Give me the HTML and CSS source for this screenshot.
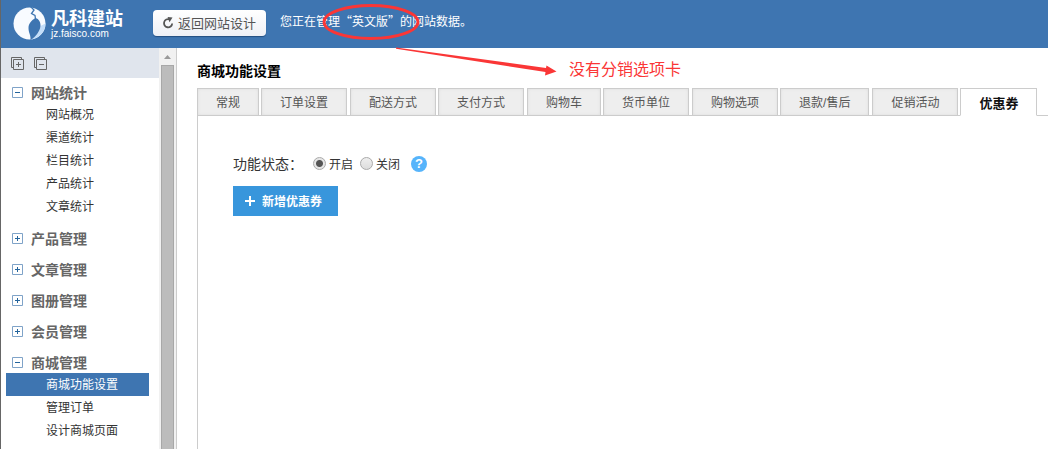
FILE: index.html
```html
<!DOCTYPE html>
<html lang="zh-CN">
<head>
<meta charset="utf-8">
<title>商城功能设置</title>
<link rel="stylesheet" href="styles.css">
</head>
<body>
<header class="topbar">
  <a class="brand" href="#">
    <svg class="brand-mark" viewBox="0 0 34 34" aria-hidden="true">
      <circle cx="16.5" cy="17.500" r="16" fill="#f8fbff"/>
      <path fill="#c3defa" d="M32.500 17.500C32.500 25 27 32 18 33.500C24 30 27 25 27.500 20Z"/>
      <path fill="#3e75b1" d="M22.500 12C18 14.500 15.500 18 15.500 22C15.500 27 18 29 17.500 34C23 31 27 25 27.500 20C27.700 16 26 13 22.500 12Z"/>
      <path fill="none" stroke="#3e75b1" stroke-width="1.300" d="M17.500 0.500L21 4L18.500 7.500L22 9.500L22.500 13"/>
    </svg>
    <span class="brand-text">
      <strong class="brand-name">凡科建站</strong>
      <span class="brand-url">jz.faisco.com</span>
    </span>
  </a>
  <button class="back" type="button">
    <svg class="back-icon" viewBox="0 0 12 12" aria-hidden="true">
      <path d="M7.600 2.400A4.100 4.100 0 1 0 10.200 6.500" fill="none" stroke="#555" stroke-width="1.800"/>
      <path d="M5.600 0L10.500 .500L7.500 5.200Z" fill="#555"/>
    </svg>
    返回网站设计
  </button>
  <p class="notice">您正在管理<span class="quote-open">“</span>英文版<span class="quote-close">”</span>的网站数据。</p>
</header>
<div class="shell">
  <aside class="sidebar">
    <div class="tree-panel">
      <div class="tree-tools">
        <button class="tool" type="button" aria-label="全部展开">
          <svg viewBox="0 0 13 13"><path d="M2.500 2.500H12.500V12.500H2.500ZM10.500 2V.5H.5V10.500H2M5 7.500H10M7.500 5V10" /></svg>
        </button>
        <button class="tool" type="button" aria-label="全部收起">
          <svg viewBox="0 0 13 13"><path d="M2.500 2.500H12.500V12.500H2.500ZM10.500 2V.5H.5V10.500H2M5 7.500H10" /></svg>
        </button>
      </div>
      <nav class="tree">
        <section class="group">
          <button class="group-head" type="button"><svg class="fold" viewBox="0 0 11 11"><path class="fold-box" d="M.5 .5H10.5V10.5H.5Z"/><path class="fold-sign" d="M3 5.5H8"/></svg>网站统计</button>
          <a class="item" href="#">网站概况</a>
          <a class="item" href="#">渠道统计</a>
          <a class="item" href="#">栏目统计</a>
          <a class="item" href="#">产品统计</a>
          <a class="item" href="#">文章统计</a>
        </section>
        <section class="group">
          <button class="group-head" type="button"><svg class="fold" viewBox="0 0 11 11"><path class="fold-box" d="M.5 .5H10.5V10.5H.5Z"/><path class="fold-sign" d="M3 5.5H8M5.5 3V8"/></svg>产品管理</button>
        </section>
        <section class="group">
          <button class="group-head" type="button"><svg class="fold" viewBox="0 0 11 11"><path class="fold-box" d="M.5 .5H10.5V10.5H.5Z"/><path class="fold-sign" d="M3 5.5H8M5.5 3V8"/></svg>文章管理</button>
        </section>
        <section class="group">
          <button class="group-head" type="button"><svg class="fold" viewBox="0 0 11 11"><path class="fold-box" d="M.5 .5H10.5V10.5H.5Z"/><path class="fold-sign" d="M3 5.5H8M5.5 3V8"/></svg>图册管理</button>
        </section>
        <section class="group">
          <button class="group-head" type="button"><svg class="fold" viewBox="0 0 11 11"><path class="fold-box" d="M.5 .5H10.5V10.5H.5Z"/><path class="fold-sign" d="M3 5.5H8M5.5 3V8"/></svg>会员管理</button>
        </section>
        <section class="group">
          <button class="group-head" type="button"><svg class="fold" viewBox="0 0 11 11"><path class="fold-box" d="M.5 .5H10.5V10.5H.5Z"/><path class="fold-sign" d="M3 5.5H8"/></svg>商城管理</button>
          <a class="item item-active" href="#">商城功能设置</a>
          <a class="item" href="#">管理订单</a>
          <a class="item" href="#">设计商城页面</a>
        </section>
      </nav>
    </div>
    <div class="scrollbar" aria-hidden="true">
      <svg class="scroll-up" viewBox="0 0 7 4"><path d="M0 4L3.5 0L7 4Z"/></svg>
      <div class="scroll-thumb"></div>
    </div>
  </aside>
  <main class="content">
    <h1 class="title">商城功能设置</h1>
    <div class="tabs" role="tablist">
      <button class="tab" type="button" role="tab">常规</button>
      <button class="tab" type="button" role="tab">订单设置</button>
      <button class="tab" type="button" role="tab">配送方式</button>
      <button class="tab" type="button" role="tab">支付方式</button>
      <button class="tab" type="button" role="tab">购物车</button>
      <button class="tab" type="button" role="tab">货币单位</button>
      <button class="tab" type="button" role="tab">购物选项</button>
      <button class="tab" type="button" role="tab">退款/售后</button>
      <button class="tab" type="button" role="tab">促销活动</button>
      <button class="tab tab-active" type="button" role="tab" aria-selected="true">优惠券</button>
    </div>
    <div class="panel" role="tabpanel">
      <div class="status" role="radiogroup" aria-labelledby="status-label">
        <span class="status-label" id="status-label">功能状态：</span>
        <label class="choice"><input class="radio" type="radio" name="status" checked>开启</label>
        <label class="choice"><input class="radio" type="radio" name="status">关闭</label>
        <button class="help" type="button" aria-label="帮助">?</button>
      </div>
      <button class="add" type="button">
        <svg class="add-icon" viewBox="0 0 10 10" aria-hidden="true"><path d="M0 5H10M5 0V10"/></svg>
        新增优惠券
      </button>
    </div>
  </main>
</div>
<svg class="markup" viewBox="0 0 240 80" aria-hidden="true">
  <ellipse cx="51" cy="22" rx="47" ry="16.5" fill="none" stroke="#fa3636" stroke-width="2.8"/>
  <path fill="#fa3636" d="M76 47.5L226 68L226.500 65.500L236.500 71.500L225 75.500L225.500 72L76 48.800Z"/>
</svg>
<p class="markup-text">没有分销选项卡</p>
</body>
</html>
```
FILE: styles.css
```css
* {
  box-sizing: border-box;
}

html,
body {
  height: 100%;
}

body {
  margin: 0;
  display: flex;
  flex-direction: column;
  position: relative;
  overflow: hidden;
  border-left: 1px solid #666;
  background: #fff;
  color: #333;
  font: 12px/21px "Noto Sans CJK SC", sans-serif;
}

button {
  margin: 0;
  padding: 0;
  border: 0;
  background: none;
  color: inherit;
  font: inherit;
  white-space: nowrap;
}

a {
  color: inherit;
  text-decoration: none;
}

p,
h1 {
  margin: 0;
}

svg {
  display: block;
  flex: none;
}

.topbar {
  flex: none;
  display: flex;
  height: 48px;
  padding-left: 12px;
  background: #3e75b1;
  color: #fff;
}

.brand {
  display: flex;
  gap: 4px;
  width: 140px;
  padding-top: 6px;
}

.brand-mark {
  width: 34px;
  height: 34px;
}

.brand-text {
  display: flex;
  flex-direction: column;
}

.brand-name {
  font-size: 18px;
  line-height: 22px;
}

.brand-url {
  font: 10px/12px "Liberation Sans", sans-serif;
}

.back {
  display: flex;
  align-items: center;
  gap: 4px;
  height: 26px;
  margin-top: 10px;
  padding: 0 10px 1px 9px;
  border-radius: 4px;
  background: linear-gradient(#fff, #eef0f6);
  box-shadow: 0 1px 1px #234f82;
  color: #555;
  font-size: 13px;
}

.back-icon {
  width: 12px;
  height: 12px;
}

.notice {
  margin: 10px 0 0 14px;
}

.quote-open,
.quote-close {
  display: inline-block;
  width: 12px;
}

.quote-open {
  text-align: right;
}

.shell {
  flex: 1;
  display: flex;
  min-height: 0;
}

.sidebar {
  flex: none;
  display: flex;
  width: 176px;
  border-right: 1px solid #ccc;
}

.tree-panel {
  flex: 1;
  overflow: hidden;
}

.tree-tools {
  display: flex;
  align-items: center;
  gap: 10px;
  height: 30px;
  padding-left: 10px;
  background: #e0e5ed;
}

.tool svg {
  width: 13px;
  height: 13px;
  fill: none;
  stroke: #666;
}

.tree {
  padding: 4px 10px 0 5px;
}

.group {
  display: flex;
  flex-direction: column;
  margin-bottom: 10px;
}

.group-head {
  display: flex;
  align-items: center;
  gap: 8px;
  height: 21px;
  padding-left: 6px;
  color: #666;
  font-size: 14px;
  font-weight: bold;
}

.fold {
  width: 11px;
  height: 11px;
  fill: none;
}

.fold-box {
  stroke: #7fa3c8;
}

.fold-sign {
  stroke: #24649c;
}

.item {
  padding: 0 0 2px 40px;
}

.item-active {
  background: #3e75b1;
  color: #fff;
}

.scrollbar {
  display: flex;
  flex-direction: column;
  align-items: center;
  gap: 6px;
  width: 17px;
  padding-top: 7px;
  background: #f1f1f1;
}

.scroll-up {
  width: 7px;
  height: 4px;
  fill: #999;
}

.scroll-thumb {
  flex: 1;
  width: 13px;
  border: 1px solid #a8a8a8;
  border-bottom: 0;
  background: #bcbcbc;
}

.content {
  flex: 1;
  display: flex;
  flex-direction: column;
  min-width: 0;
  padding: 12px 0 0 20px;
}

.title {
  color: #000;
  font-size: 14px;
}

.tabs {
  display: flex;
  gap: 2px;
  margin-top: 7px;
  box-shadow: inset 0 -1px #ccc;
}

.tab {
  flex: none;
  height: 28px;
  padding: 2px 18px 0;
  border: 1px solid #ccc;
  background: #eee;
  box-shadow: inset 0 0 3px #ddd;
  color: #555;
  font-family: "Liberation Sans", "Noto Sans CJK SC", sans-serif;
}

.tab:nth-child(even) {
  margin-right: 1px;
}

.tab-active {
  border-bottom-color: #fff;
  background: #fff;
  box-shadow: none;
  color: #111;
  font-size: 13px;
  font-weight: bold;
}

.panel {
  flex: 1;
  padding: 37px 0 0 35px;
  border-left: 1px solid #ccc;
}

.status {
  display: flex;
  align-items: center;
}

.status-label {
  width: 80px;
  font-size: 14px;
}

.choice {
  display: flex;
  align-items: center;
  gap: 3px;
  margin-right: 7px;
}

.radio {
  appearance: none;
  width: 13px;
  height: 13px;
  margin: 0;
  border: 1px solid #aaa;
  border-radius: 50%;
  background: linear-gradient(#eee, #ddd);
}

.radio:checked {
  background: radial-gradient(circle, #555 3px, #e6e6e6 4px);
}

.help {
  width: 16px;
  height: 16px;
  margin-left: 4px;
  border-radius: 50%;
  background: #56b4fb;
  color: #fff;
  font: bold 13px/16px "Liberation Sans", sans-serif;
}

.add {
  display: flex;
  align-items: center;
  gap: 7px;
  height: 30px;
  margin-top: 12px;
  padding: 0 16px 1px 12px;
  background: #3896dc;
  color: #fff;
  font-weight: bold;
}

.add-icon {
  width: 10px;
  height: 10px;
  stroke: #fff;
  stroke-width: 2;
}

.markup {
  position: absolute;
  left: 319px;
  top: 0;
  width: 240px;
  height: 80px;
  pointer-events: none;
}

.markup-text {
  position: absolute;
  left: 568px;
  top: 58px;
  color: #fa3636;
  font-size: 16px;
}
```
